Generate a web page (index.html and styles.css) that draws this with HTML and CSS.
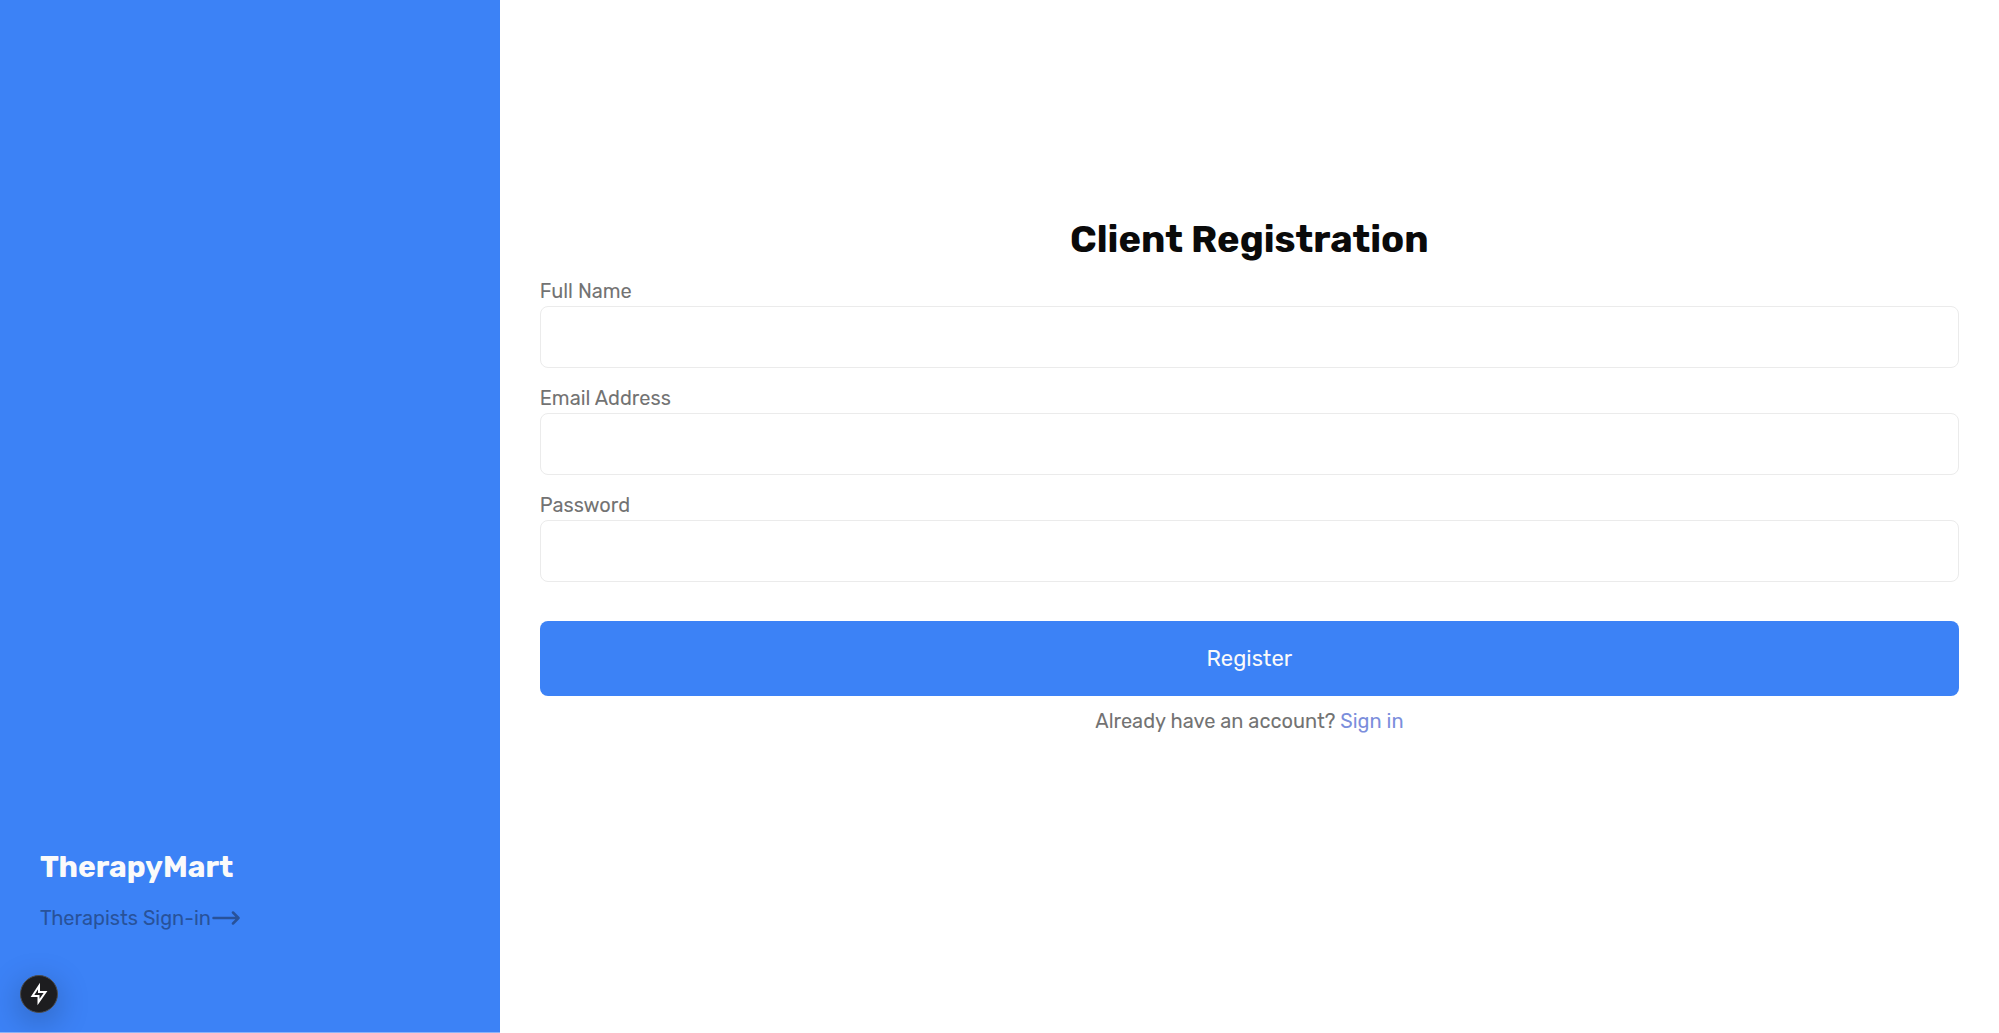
FILE: index.html
```html
<!DOCTYPE html>
<html lang="en">
<head>
    <meta charset="UTF-8">
    <meta name="viewport" content="width=device-width, initial-scale=1.0">
    <title>TherapyMart - Client Registration</title>
    <link rel="stylesheet" href="styles.css">
</head>
<body>
    <div class="page">
        <aside class="sidebar">
            <h2 class="brand">TherapyMart</h2>
            <a class="therapist-link" href="#">Therapists Sign-in<svg class="arrow" viewBox="0 0 30 14" aria-hidden="true"><path d="M2.500 7H27.500M22 1.500L27.500 7L22 12.500"/></svg></a>
        </aside>

        <main class="content">
            <form class="register-form">
                <h1>Client Registration</h1>

                <div class="field">
                    <label for="fullName">Full Name</label>
                    <input type="text" id="fullName" name="fullName" required>
                </div>
                <div class="field">
                    <label for="email">Email Address</label>
                    <input type="email" id="email" name="email" required>
                </div>
                <div class="field">
                    <label for="password">Password</label>
                    <input type="password" id="password" name="password" required>
                </div>

                <button type="submit" class="submit">Register</button>
                <p class="signin">Already have an account? <a href="#">Sign in</a></p>
            </form>
        </main>
    </div>

    <!-- Floating quick action button -->
    <button type="button" class="bolt" aria-label="Status">
        <svg viewBox="0 0 20 24" aria-hidden="true"><path d="M10 4L3.500 14H9.500V20L16.500 10H10Z"/></svg>
    </button>
</body>
</html>
```

FILE: styles.css
```css
* {
    box-sizing: border-box;
}

body {
    margin: 0;
    background-color: #fff;
    color: #737373;
    font-family: Rubik, Roboto, sans-serif;
    font-size: 20px;
    line-height: 30px;
}

h1,
h2,
p {
    margin: 0;
}

a {
    text-decoration: none;
}

.page {
    display: grid;
    grid-template-columns: 1fr 3fr;
    min-height: 100vh;
}

/* Sidebar */
.sidebar {
    display: flex;
    flex-direction: column;
    justify-content: flex-end;
    align-items: flex-start;
    gap: 16px;
    padding: 40px 40px 99px;
    background-color: #3c82f6;
    border-bottom: 1px solid #8ab4f9;
}

.brand {
    color: #fafafa;
    font-size: 30px;
    line-height: 40px;
}

.therapist-link {
    display: flex;
    align-items: center;
    color: #28529a;
}

.arrow {
    width: 30px;
    height: 14px;
    fill: none;
    stroke: currentColor;
    stroke-width: 2.5;
    stroke-linecap: round;
    stroke-linejoin: round;
}

/* Registration form */
.content {
    display: flex;
    flex-direction: column;
    justify-content: center;
    padding: 0 40px 80px;
}

.register-form {
    display: flex;
    flex-direction: column;
    gap: 15px;
}

h1 {
    color: #0a0a0a;
    font-size: 38px;
    line-height: 44px;
    text-align: center;
}

.field {
    display: flex;
    flex-direction: column;
}

.field input {
    width: 100%;
    height: 62px;
    padding: 0 16px;
    border: 1px solid #ebebeb;
    border-radius: 8px;
    background-color: #fff;
    font: inherit;
}

.submit {
    height: 75px;
    margin-top: 24px;
    border: none;
    border-radius: 8px;
    background-color: #3c82f6;
    color: #fafafa;
    font: inherit;
    font-size: 22px;
    cursor: pointer;
}

.signin {
    margin-top: -5px;
    text-align: center;
}

.signin a {
    color: #7b8edc;
}

/* Floating button */
.bolt {
    position: fixed;
    left: 20px;
    bottom: 20px;
    display: flex;
    align-items: center;
    justify-content: center;
    width: 38px;
    height: 38px;
    padding: 0;
    border: 1px solid #4a4a4a;
    border-radius: 50%;
    background-color: #1d1d1f;
    box-shadow: 0 8px 32px rgba(0, 0, 0, 0.25);
    cursor: pointer;
}

.bolt svg {
    width: 20px;
    height: 24px;
    fill: none;
    stroke: #fff;
    stroke-width: 2;
    flex-shrink: 0;
}
```
